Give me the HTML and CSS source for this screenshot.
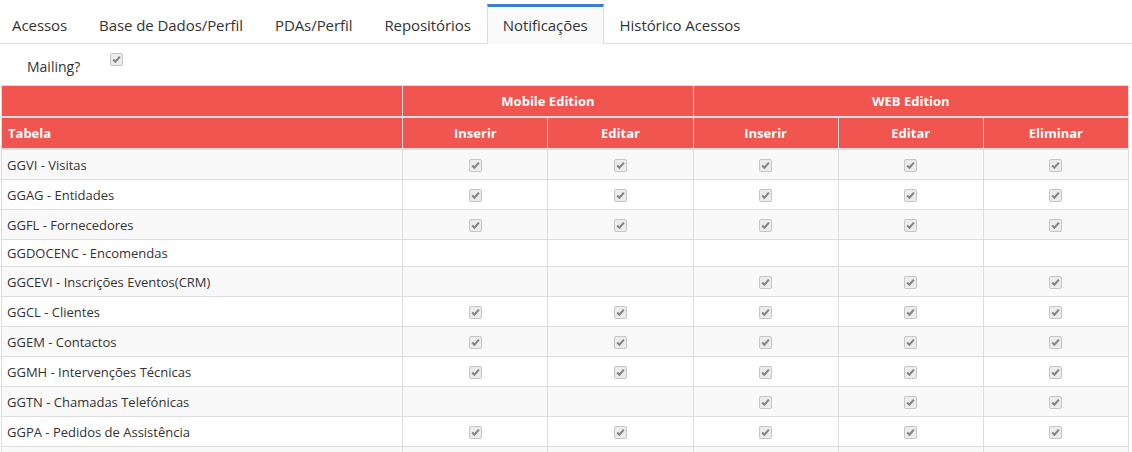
FILE: index.html
```html
<!DOCTYPE html>
<html lang="pt">
<head>
    <meta charset="UTF-8">
    <title>Notificações</title>
    <link rel="stylesheet" href="styles.css">
</head>
<body>
    <ul class="tabs">
        <li><a href="#">Acessos</a></li>
        <li><a href="#">Base de Dados/Perfil</a></li>
        <li><a href="#">PDAs/Perfil</a></li>
        <li><a href="#">Repositórios</a></li>
        <li class="active"><a href="#">Notificações</a></li>
        <li><a href="#">Histórico Acessos</a></li>
    </ul>

    <div class="mailing">
        <label for="mailing">Mailing?</label>
        <input type="checkbox" id="mailing" class="cb" checked disabled>
    </div>

    <table class="grid">
        <colgroup>
            <col class="c-name">
            <col class="c-op"><col class="c-op">
            <col class="c-op"><col class="c-op"><col class="c-op">
        </colgroup>
        <thead>
            <tr>
                <th></th>
                <th colspan="2">Mobile Edition</th>
                <th colspan="3">WEB Edition</th>
            </tr>
            <tr>
                <th class="left">Tabela</th>
                <th>Inserir</th>
                <th>Editar</th>
                <th>Inserir</th>
                <th>Editar</th>
                <th>Eliminar</th>
            </tr>
        </thead>
        <tbody>
            <tr><td>GGVI - Visitas</td><td><input type="checkbox" class="cb" checked disabled></td><td><input type="checkbox" class="cb" checked disabled></td><td><input type="checkbox" class="cb" checked disabled></td><td><input type="checkbox" class="cb" checked disabled></td><td><input type="checkbox" class="cb" checked disabled></td></tr>
            <tr><td>GGAG - Entidades</td><td><input type="checkbox" class="cb" checked disabled></td><td><input type="checkbox" class="cb" checked disabled></td><td><input type="checkbox" class="cb" checked disabled></td><td><input type="checkbox" class="cb" checked disabled></td><td><input type="checkbox" class="cb" checked disabled></td></tr>
            <tr><td>GGFL - Fornecedores</td><td><input type="checkbox" class="cb" checked disabled></td><td><input type="checkbox" class="cb" checked disabled></td><td><input type="checkbox" class="cb" checked disabled></td><td><input type="checkbox" class="cb" checked disabled></td><td><input type="checkbox" class="cb" checked disabled></td></tr>
            <tr><td>GGDOCENC - Encomendas</td><td></td><td></td><td></td><td></td><td></td></tr>
            <tr><td>GGCEVI - Inscrições Eventos(CRM)</td><td></td><td></td><td><input type="checkbox" class="cb" checked disabled></td><td><input type="checkbox" class="cb" checked disabled></td><td><input type="checkbox" class="cb" checked disabled></td></tr>
            <tr><td>GGCL - Clientes</td><td><input type="checkbox" class="cb" checked disabled></td><td><input type="checkbox" class="cb" checked disabled></td><td><input type="checkbox" class="cb" checked disabled></td><td><input type="checkbox" class="cb" checked disabled></td><td><input type="checkbox" class="cb" checked disabled></td></tr>
            <tr><td>GGEM - Contactos</td><td><input type="checkbox" class="cb" checked disabled></td><td><input type="checkbox" class="cb" checked disabled></td><td><input type="checkbox" class="cb" checked disabled></td><td><input type="checkbox" class="cb" checked disabled></td><td><input type="checkbox" class="cb" checked disabled></td></tr>
            <tr><td>GGMH - Intervenções Técnicas</td><td><input type="checkbox" class="cb" checked disabled></td><td><input type="checkbox" class="cb" checked disabled></td><td><input type="checkbox" class="cb" checked disabled></td><td><input type="checkbox" class="cb" checked disabled></td><td><input type="checkbox" class="cb" checked disabled></td></tr>
            <tr><td>GGTN - Chamadas Telefónicas</td><td></td><td></td><td><input type="checkbox" class="cb" checked disabled></td><td><input type="checkbox" class="cb" checked disabled></td><td><input type="checkbox" class="cb" checked disabled></td></tr>
            <tr><td>GGPA - Pedidos de Assistência</td><td><input type="checkbox" class="cb" checked disabled></td><td><input type="checkbox" class="cb" checked disabled></td><td><input type="checkbox" class="cb" checked disabled></td><td><input type="checkbox" class="cb" checked disabled></td><td><input type="checkbox" class="cb" checked disabled></td></tr>
            <tr><td>&nbsp;</td><td></td><td></td><td></td><td></td><td></td></tr>
        </tbody>
    </table>
</body>
</html>
```

FILE: styles.css
```css
body {
    margin: 0;
    font-family: "Open Sans", "Liberation Sans", sans-serif;
    color: #333;
    background: #fff;
}
.tabs {
    display: flex;
    list-style: none;
    margin: 0 0 0 -4px;
    padding: 4px 0 0;
    border-bottom: 1px solid #ddd;
}
.tabs li {
    margin-bottom: -1px;
}
.tabs a {
    display: block;
    padding: 8px 15px 9px;
    border: 1px solid transparent;
    border-top: 3px solid transparent;
    border-bottom: 0;
    font-size: 15px;
    line-height: 20px;
    letter-spacing: -0.07px;
    color: #333;
    text-decoration: none;
}
.tabs .active a {
    background: #fafafa;
    border-color: #ddd;
    border-top-color: #3b7fd0;
}
.mailing {
    display: flex;
    align-items: flex-start;
    height: 41px;
    padding-left: 27px;
}
.mailing label {
    margin-top: 13px;
    font-size: 14px;
    line-height: 20px;
}
.mailing .cb {
    margin: 9px 0 0 30px;
}
.cb {
    appearance: none;
    -webkit-appearance: none;
    display: block;
    width: 13px;
    height: 13px;
    margin: 5px auto 3px;
    border: 1px solid #c6c6c6;
    border-radius: 2px;
    background: #ececec url("data:image/svg+xml,%3Csvg xmlns='http://www.w3.org/2000/svg' width='11' height='11'%3E%3Cpath d='M2.2 5.6 L4.4 7.8 L8.9 2.6' fill='none' stroke='%23858585' stroke-width='2.1'/%3E%3C/svg%3E") center / 11px 11px no-repeat;
}
.grid {
    border-collapse: collapse;
    table-layout: fixed;
    width: 1128px;
    margin-left: 1px;
    font-size: 13px;
}
.c-name {
    width: 401px;
}
.c-op {
    width: 145px;
}
.grid th {
    background: #f0554f;
    color: #fff;
    font-weight: 700;
    text-align: center;
    padding: 5px 6px;
    line-height: 20px;
    border: 1px solid #ddd;
    border-bottom-width: 2px;
}
.grid th.left {
    text-align: left;
}
.grid td {
    padding: 4px 5px;
    line-height: 18px;
    border: 1px solid #ddd;
    vertical-align: middle;
}
.grid tbody tr:nth-child(odd) {
    background: #f9f9f9;
}
```
